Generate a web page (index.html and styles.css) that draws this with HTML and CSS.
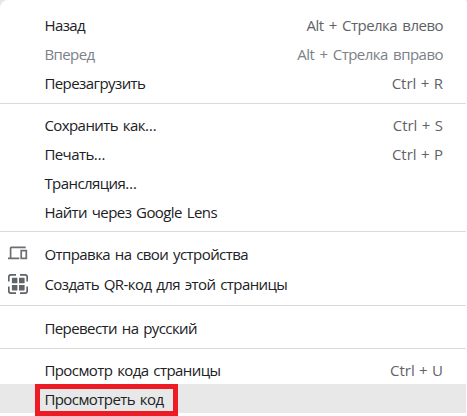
FILE: index.html
```html
<!DOCTYPE html>
<html lang="ru">
<head>
<meta charset="utf-8">
<title>Меню</title>
<link rel="stylesheet" href="styles.css">
</head>
<body>
<div class="menu">
  <div class="group">
    <div class="item"><span class="label">Назад</span><span class="key">Alt + Стрелка влево</span></div>
    <div class="item disabled"><span class="label">Вперед</span><span class="key">Alt + Стрелка вправо</span></div>
    <div class="item"><span class="label">Перезагрузить</span><span class="key short">Ctrl + R</span></div>
  </div>
  <div class="group">
    <div class="item"><span class="label">Сохранить как…</span><span class="key short">Ctrl + S</span></div>
    <div class="item"><span class="label">Печать…</span><span class="key short">Ctrl + P</span></div>
    <div class="item"><span class="label">Трансляция…</span></div>
    <div class="item"><span class="label">Найти через Google Lens</span></div>
  </div>
  <div class="group tools">
    <div class="item">
      <svg class="icon" viewBox="0 0 20 20" fill="none" stroke="#6b6e73" stroke-width="1.7"><path d="M17.7 3.3H3.2Q2.6 3.3 2.6 4.1V14.2M0 14.4H11.3M13.2 6.6H18.3V14.4H13.2Z"/></svg>
      <span class="label">Отправка на свои устройства</span>
    </div>
    <div class="item">
      <svg class="icon" viewBox="0 0 20 20" fill="none" stroke="#606368" stroke-width="1.7"><path d="M.8 7.5V3Q.8.8 3 .8H8M12 .8H17Q19.2.8 19.2 3V7.5M19.2 12.5V17Q19.2 19.2 17 19.2H12M8 19.2H3Q.8 19.2.8 17V12.5"/><path fill="#606368" stroke="none" d="M4.5 3.7H9.4V9.3H3.9V4.3ZM11 3.7H16L16.6 4.3V9.3H11ZM3.9 11H9.4V16.5H4.5L3.9 16ZM11 11H16.6V16L16 16.5H11Z"/></svg>
      <span class="label">Создать QR-код для этой страницы</span>
    </div>
  </div>
  <div class="group">
    <div class="item"><span class="label">Перевести на русский</span></div>
  </div>
  <div class="group">
    <div class="item"><span class="label">Просмотр кода страницы</span><span class="key short">Ctrl + U</span></div>
    <div class="item selected"><span class="label">Просмотреть код</span><span class="mark"></span></div>
  </div>
</div>
</body>
</html>
```

FILE: styles.css
```css
body {
  margin: 0;
  background: #e4e4e9;
  font: 15px/29px "Open Sans", "Noto Sans", sans-serif;
  color: #202124;
  overflow: hidden;
}
.menu {
  box-sizing: border-box;
  height: 416px;
  padding: 10px 1px 0 0;
  background: #fff;
  border-radius: 8px 2px 0 0;
}
.group + .group {
  margin-top: 6px;
  padding-top: 6px;
  border-top: 1px solid #dadada;
}
.group + .tools {
  margin-top: 5px;
  padding-bottom: 1px;
}
.tools + .group {
  padding-top: 7px;
}
.item {
  position: relative;
  display: flex;
  justify-content: space-between;
  height: 29px;
  padding: 1px 23px 0 44.4px;
  box-sizing: border-box;
  white-space: nowrap;
}
.label {
  letter-spacing: -0.57px;
  word-spacing: 1.4px;
}
.key {
  color: #5f6368;
  letter-spacing: -0.52px;
  word-spacing: 1.8px;
}
.short {
  letter-spacing: 0;
  word-spacing: 0.5px;
}
.disabled, .disabled .key { color: #7c8087; }
.tools .item {
  height: 30px;
  padding-top: 2px;
}
.icon {
  position: absolute;
  left: 8px;
  top: 6px;
  width: 20px;
  height: 20px;
}
.selected {
  background: #e8e8e8;
}
.mark {
  position: absolute;
  left: 35px;
  top: 0;
  width: 143px;
  height: 32px;
  box-sizing: border-box;
  border: 5px solid #ed1c24;
}
```
